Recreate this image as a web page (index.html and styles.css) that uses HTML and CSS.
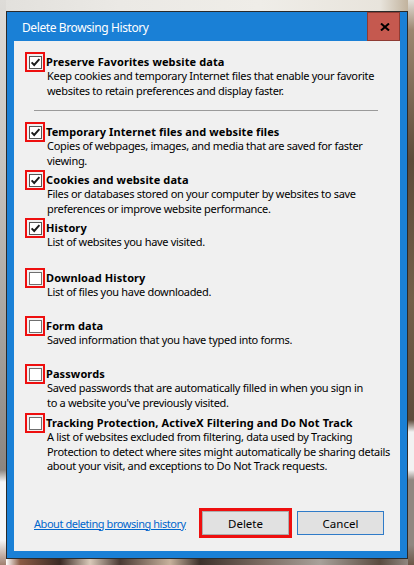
FILE: index.html
```html
<!DOCTYPE html>
<html lang="en">
<head>
<meta charset="utf-8">
<title>Delete Browsing History</title>
<link rel="stylesheet" href="styles.css">
</head>
<body>
<div class="backdrop">
  <div class="dialog">
    <div class="titlebar">
      <span class="title">Delete Browsing History</span>
      <span class="close" aria-label="Close">
        <svg width="10" height="8" viewBox="0 0 10 8"><path d="M1 0.5 L9 7.5 M9 0.5 L1 7.5" stroke="#000" stroke-width="2" fill="none"/></svg>
      </span>
    </div>
    <div class="content">
      <div class="options">
        <div class="item item-first">
          <span class="mark"><span class="box checked"><svg width="11" height="11" viewBox="0 0 11 11"><path d="M1.6 5.4 L4.2 8 L9.4 2.2" stroke="#1a1a1a" stroke-width="1.9" fill="none"/></svg></span></span>
          <div class="text">
            <div class="head">Preserve Favorites website data</div>
            <div class="desc">Keep cookies and temporary Internet files that enable your favorite<br>websites to retain preferences and display faster.</div>
          </div>
        </div>
        <div class="sep"></div>
        <div class="item h48">
          <span class="mark"><span class="box checked"><svg width="11" height="11" viewBox="0 0 11 11"><path d="M1.6 5.4 L4.2 8 L9.4 2.2" stroke="#1a1a1a" stroke-width="1.9" fill="none"/></svg></span></span>
          <div class="text">
            <div class="head">Temporary Internet files and website files</div>
            <div class="desc">Copies of webpages, images, and media that are saved for faster<br>viewing.</div>
          </div>
        </div>
        <div class="item h48">
          <span class="mark"><span class="box checked"><svg width="11" height="11" viewBox="0 0 11 11"><path d="M1.6 5.4 L4.2 8 L9.4 2.2" stroke="#1a1a1a" stroke-width="1.9" fill="none"/></svg></span></span>
          <div class="text">
            <div class="head">Cookies and website data</div>
            <div class="desc">Files or databases stored on your computer by websites to save<br>preferences or improve website performance.</div>
          </div>
        </div>
        <div class="item h50">
          <span class="mark"><span class="box checked"><svg width="11" height="11" viewBox="0 0 11 11"><path d="M1.6 5.4 L4.2 8 L9.4 2.2" stroke="#1a1a1a" stroke-width="1.9" fill="none"/></svg></span></span>
          <div class="text">
            <div class="head">History</div>
            <div class="desc">List of websites you have visited.</div>
          </div>
        </div>
        <div class="item h48">
          <span class="mark"><span class="box"></span></span>
          <div class="text">
            <div class="head">Download History</div>
            <div class="desc">List of files you have downloaded.</div>
          </div>
        </div>
        <div class="item h48">
          <span class="mark"><span class="box"></span></span>
          <div class="text">
            <div class="head">Form data</div>
            <div class="desc">Saved information that you have typed into forms.</div>
          </div>
        </div>
        <div class="item h49">
          <span class="mark"><span class="box"></span></span>
          <div class="text">
            <div class="head">Passwords</div>
            <div class="desc">Saved passwords that are automatically filled in when you sign in<br>to a website you've previously visited.</div>
          </div>
        </div>
        <div class="item">
          <span class="mark"><span class="box"></span></span>
          <div class="text">
            <div class="head">Tracking Protection, ActiveX Filtering and Do Not Track</div>
            <div class="desc">A list of websites excluded from filtering, data used by Tracking<br>Protection to detect where sites might automatically be sharing details<br>about your visit, and exceptions to Do Not Track requests.</div>
          </div>
        </div>
      </div>
      <div class="footer">
        <a class="link" href="#">About deleting browsing history</a>
        <span class="highlight"><span class="btn">Delete</span></span>
        <span class="btn btn-default">Cancel</span>
      </div>
    </div>
  </div>
</div>
</body>
</html>
```

FILE: styles.css
```css
html, body {
  margin: 0;
  padding: 0;
  width: 414px;
  height: 565px;
  overflow: hidden;
}

body {
  font-family: "Noto Sans", "Open Sans", sans-serif;
  font-size: 11px;
  color: #000;
}

.backdrop {
  width: 414px;
  height: 565px;
  padding: 11px 0 0 6px;
  box-sizing: border-box;
  background:
    linear-gradient(to bottom, #e4e1da 0, #9c8770 30px, #5d4b3a 160px, #735f49 300px, #5e4c3c 420px, #f2f2f2 432px, #f2f2f2 470px, #8f8780 480px, #8f8780 545px, #6b5647 565px) right top / 6px 100% no-repeat,
    linear-gradient(to bottom, #dedcd8 0, #c8c5c0 160px, #a39f9a 350px, #8b8580 470px, #f6f6f6 482px, #f6f6f6 540px, #a08070 565px) left top / 6px 100% no-repeat,
    linear-gradient(to right, #ffffff 0, #ffffff 6px, #8a5b44 20px, #3b2a24 60px, #d9c9b9 90px, #4a3a33 120px, #c7b19c 170px, #3d312b 200px, #7a6a60 260px, #a8a19a 320px, #5a4b40 380px, #9b948e 414px) left bottom / 100% 6px no-repeat,
    linear-gradient(to right, #e2e0dc 0, #ebe9e5 120px, #efede8 260px, #e8e4dc 380px, #b9a890 414px) left top / 100% 11px no-repeat,
    #d8d5d0;
}

.dialog {
  width: 402px;
  height: 548px;
  box-sizing: border-box;
  border: 1px solid #2a2a2a;
  background: #1a80d6;
  padding: 0 7px 7px 7px;
  display: flex;
  flex-direction: column;
}

.titlebar {
  height: 29px;
  display: flex;
  align-items: center;
  justify-content: space-between;
  flex: none;
}

.title {
  color: #fff;
  font-size: 12px;
  letter-spacing: -0.4px;
  padding-left: 8px;
  padding-top: 1px;
}

.close {
  width: 33px;
  height: 29px;
  box-sizing: border-box;
  background: #c5594f;
  border: 1px solid #8e3b33;
  display: flex;
  align-items: center;
  justify-content: center;
  padding-left: 2px;
  padding-top: 1px;
}

.close svg {
  display: block;
}

.content {
  flex: 1;
  background: #f0f0f0;
  display: flex;
  flex-direction: column;
  padding: 11px 16px 13px 11px;
}

.options {
  display: flex;
  flex-direction: column;
}

.item {
  display: grid;
  grid-template-columns: 20px 1fr;
  align-items: start;
}

.item-first { height: 58px; }
.h48 { height: 48px; }
.h49 { height: 49px; }
.h50 { height: 50px; }

.mark {
  width: 20px;
  height: 20px;
  box-sizing: border-box;
  border: 2px solid #ee0f0f;
  padding: 2px 0 0 2px;
}

.box {
  display: block;
  width: 13px;
  height: 13px;
  box-sizing: border-box;
  border: 1px solid #6f6f6f;
  background: #fff;
}

.box.checked {
  border-color: #555;
}

.box svg {
  display: block;
}

.text {
  min-width: 0;
  white-space: nowrap;
}

.head {
  font-weight: bold;
  line-height: 15px;
  letter-spacing: 0.1px;
  margin-top: 2px;
  padding-left: 1px;
}

.desc {
  line-height: 14.5px;
  letter-spacing: -0.3px;
  padding-left: 2px;
}

.sep {
  height: 1px;
  background: #9a9a9a;
  margin: 0 6px 11px 9px;
}

.footer {
  margin-top: auto;
  display: flex;
  align-items: center;
}

.link {
  color: #0066cc;
  text-decoration: underline;
  white-space: nowrap;
  letter-spacing: -0.45px;
  margin-left: 9px;
  margin-right: auto;
}

.highlight {
  border: 3px solid #ee0f0f;
  display: flex;
}

.btn {
  width: 87px;
  height: 24px;
  box-sizing: border-box;
  background: #e1e1e1;
  border: 1px solid #adadad;
  display: flex;
  align-items: center;
  justify-content: center;
  font-size: 11.5px;
}

.btn-default {
  margin-left: 5px;
  border-color: #2f7bc8;
}
```
